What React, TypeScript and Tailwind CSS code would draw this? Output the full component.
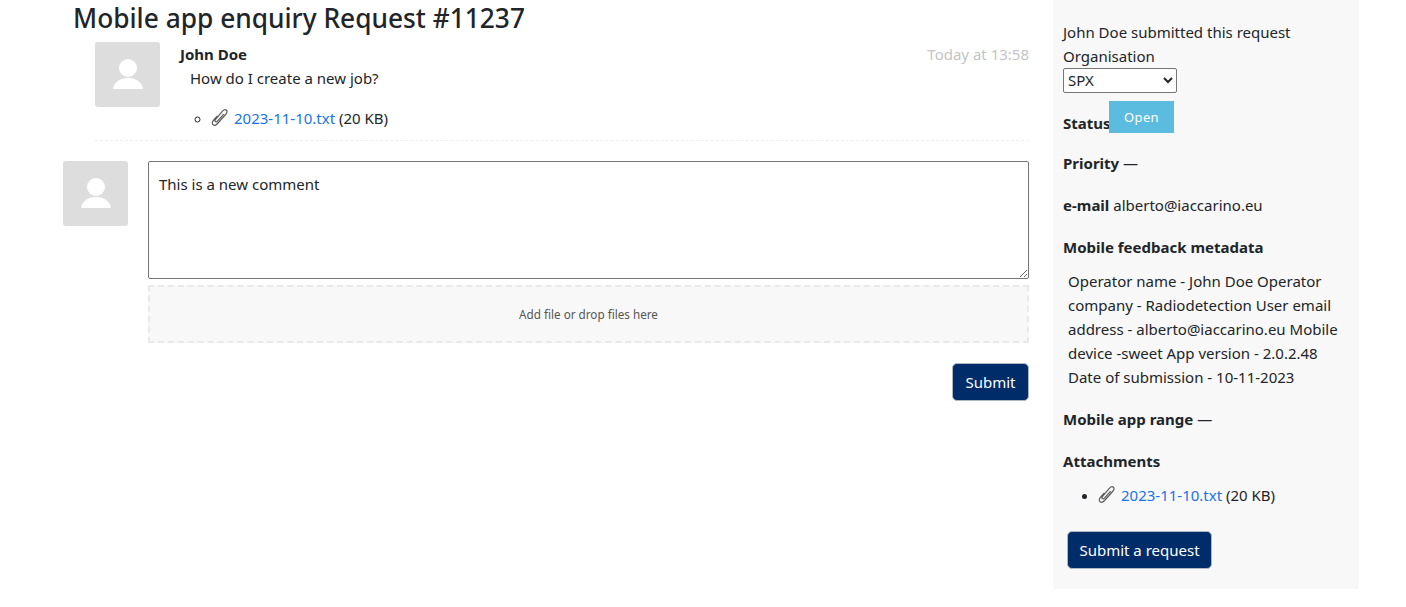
import React from 'react';

const Avatar = () => (
  <div className="w-[65px] h-[65px] shrink-0 rounded-[3px] bg-[#dddddd]">
    <svg width="65" height="65" viewBox="0 0 65 65" fill="#ffffff">
      <circle cx="33" cy="26" r="9" />
      <path d="M18 47c1-7 7-11 15-11s14 4 15 11z" />
    </svg>
  </div>
);

const ClipIcon = () => (
  <svg width="18" height="18" viewBox="0 0 17 17" fill="none" stroke="#5c5c5c" strokeWidth="1.15" className="inline-block align-[-3px] mr-[5px] -ml-px">
    <path d="M6 6.5 2.6 10.4c-1.9 2.1-1.6 3.7-.6 4.5 1.1.9 2.600.6 4.200-1.200l7.600-8.500c1.700-1.900 1.600-3.200.7-4-1-.9-2.300-.6-3.800 1L4.500 9.600c-.9 1-.9 1.800-.4 2.300.6.500 1.300.3 2.200-.7l5.700-6.400" />
  </svg>
);

const Attachment = () => (
  <>
    <ClipIcon />
    <a className="text-[#1a73e8]">2023-11-10.txt</a> (20 KB)
  </>
);

const App = () => {
  return (
    <div className="flex h-[607px] bg-white pl-[63px] text-[15px] leading-6 text-[#212529] font-['Noto_Sans','Open_Sans',sans-serif]">
      {/* Request thread */}
      <div className="w-[966px] shrink-0">
        <h1 className="pl-[10px] h-[42px] text-[26.3px] leading-[36px] font-medium">Mobile app enquiry Request #11237</h1>

        <div className="ml-8 h-[99px] border-b border-dashed border-[#eeeeee] flex gap-5">
          <Avatar />
          <div className="flex-1">
            <div className="flex justify-between">
              <strong className="font-bold">John Doe</strong>
              <span className="text-[#c4c4c4]">Today at 13:58</span>
            </div>
            <p className="pl-[10px]">How do I create a new job?</p>
            <ul className="mt-4 pl-8 list-[circle]">
              <li><Attachment /></li>
            </ul>
          </div>
        </div>

        <div className="mt-5 flex gap-5">
          <Avatar />
          <div className="flex-1">
            <textarea
              className="block w-full h-[118px] border border-[#767676] rounded-[2px] px-[10px] py-[10px] bg-white"
              defaultValue="This is a new comment"
            />
            <div className="mt-[6px] h-[58px] flex items-center justify-center border-2 border-dashed border-[#e9e9e9] bg-[#f8f8f8] text-[11.7px] text-[#555555]">
              Add file or drop files here
            </div>
            <div className="mt-5 flex justify-end">
              <button className="h-[38px] w-[77px] rounded-[5px] border border-[#b0b7c3] bg-[#002d6a] text-white">Submit</button>
            </div>
          </div>
        </div>
      </div>

      {/* Sidebar */}
      <aside className="ml-6 h-[589px] w-[306px] shrink-0 bg-[#f8f8f8] pl-[10px] pr-4 pt-5">
        <p>John Doe submitted this request</p>
        <label className="block">Organisation</label>
        <select className="block h-[25px] w-[114px] rounded-[2px] border border-[#767676] bg-white pb-px">
          <option>SPX</option>
        </select>
        <div className="flex h-[32px] items-start mt-2">
          <strong className="mt-[10px] w-[46px] font-bold">Status</strong>
          <span className="flex h-8 w-[65px] items-center justify-center bg-[#5bbce0] pb-px text-[13px] tracking-wide text-white">Open</span>
        </div>
        <p className="mt-[18px]"><strong className="font-bold">Priority</strong> —</p>
        <p className="mt-[18px]"><strong className="font-bold">e-mail</strong> alberto@iaccarino.eu</p>
        <p className="mt-[18px] font-bold">Mobile feedback metadata</p>
        <p className="mt-[10px] pl-[5px]">Operator name - John Doe Operator company - Radiodetection User email address - alberto@iaccarino.eu Mobile device -sweet App version - 2.0.2.48 Date of submission - 10-11-2023</p>
        <p className="mt-[18px]"><strong className="font-bold">Mobile app range</strong> —</p>
        <p className="mt-[18px] font-bold">Attachments</p>
        <ul className="mt-[10px] pl-9 list-disc">
          <li><Attachment /></li>
        </ul>
        <button className="mt-[24px] ml-1 h-[38px] w-[145px] rounded-[5px] border border-[#b0b7c3] bg-[#002d6a] text-white">Submit a request</button>
      </aside>
    </div>
  );
};

export default App;
